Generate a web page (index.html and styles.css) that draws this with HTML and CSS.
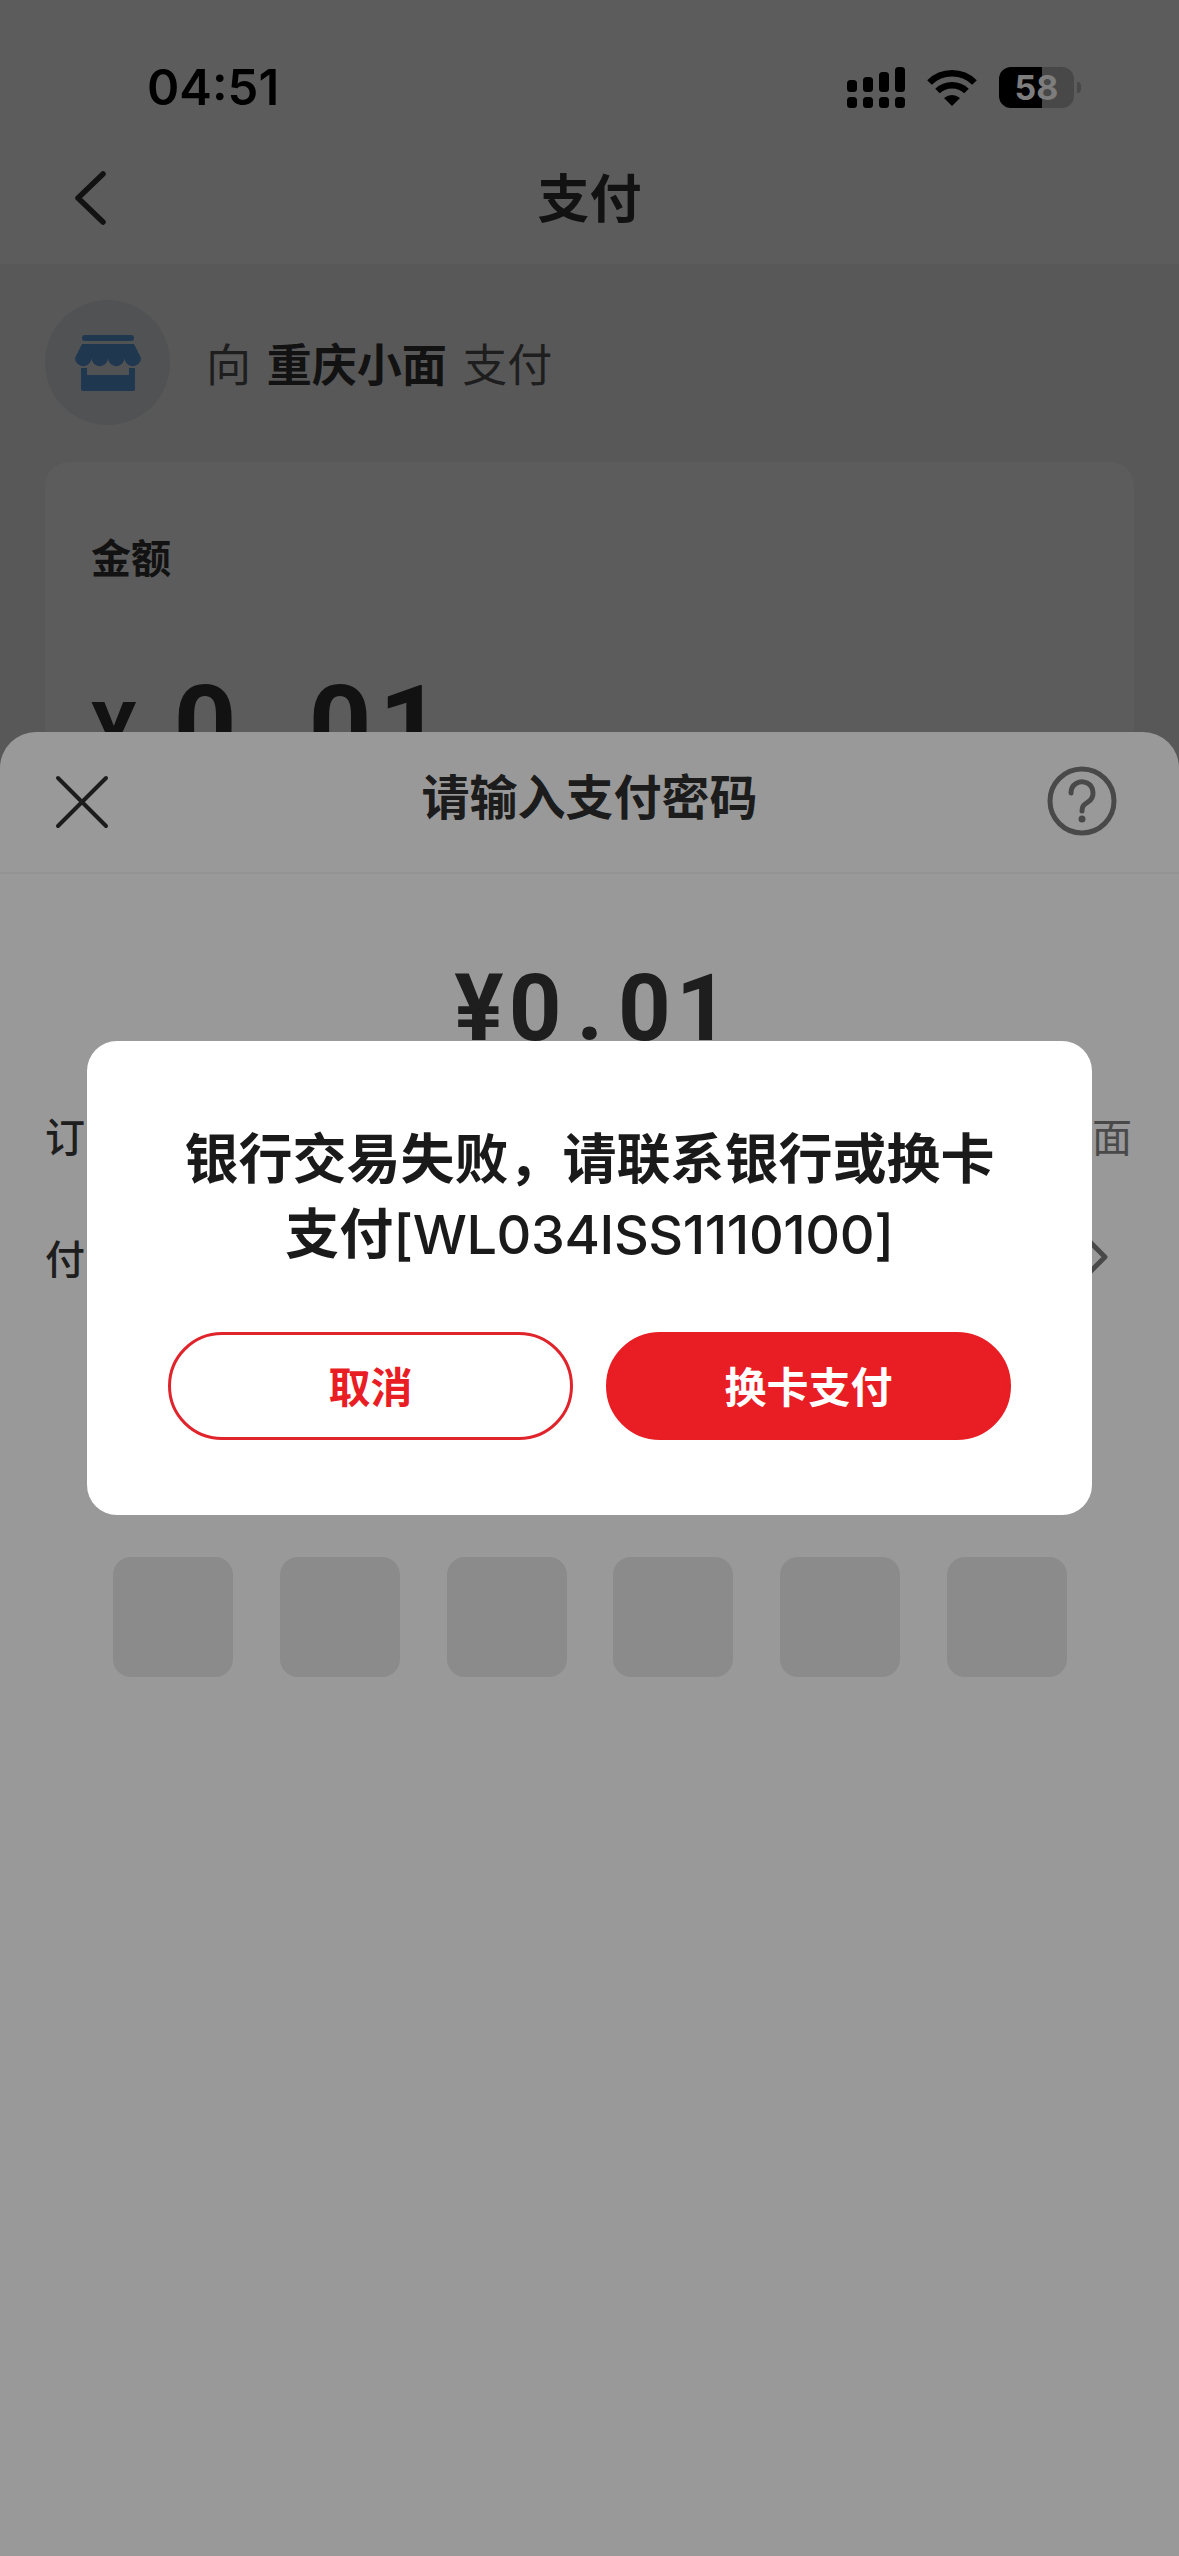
FILE: index.html
```html
<!DOCTYPE html>
<html lang="zh-CN">

<head>
    <meta http-equiv="Content-Type" content="text/html; charset=UTF-8" />
    <meta name="viewport" content="width=device-width, initial-scale=1.0">
    <title>支付</title>
    <link rel="stylesheet" href="styles.css">
</head>

<body>
    <div class="page">
        <header class="page-header">
            <div class="status-bar">
                <span class="status-time">04:51</span>
                <div class="status-icons">
                    <svg class="icon-signal" viewBox="0 0 58 41" width="58" height="41">
                        <rect x="0" y="13" width="10" height="12" rx="3.5" />
                        <rect x="16" y="10" width="10" height="15" rx="3.5" />
                        <rect x="32" y="5" width="10" height="20" rx="3.5" />
                        <rect x="48" y="0" width="10" height="25" rx="3.5" />
                        <rect x="0" y="30" width="10" height="11" rx="3.5" />
                        <rect x="16" y="30" width="10" height="11" rx="3.5" />
                        <rect x="32" y="30" width="10" height="11" rx="3.5" />
                        <rect x="48" y="30" width="10" height="11" rx="3.5" />
                    </svg>
                    <svg class="icon-wifi" viewBox="0 0 50 37" width="50" height="37">
                        <path d="M2.5 13.5A32 32 0 0 1 47.5 13.5" fill="none" stroke="#000" stroke-width="6.5" />
                        <path d="M10.5 22A21 21 0 0 1 39.5 22" fill="none" stroke="#000" stroke-width="6.5" />
                        <path d="M25 37L17 29Q25 23 33 29Z" />
                    </svg>
                    <div class="battery">58</div>
                </div>
            </div>
            <div class="nav-bar">
                <svg class="icon-back" viewBox="0 0 32 54" width="32" height="54">
                    <path d="M29 3L4 27L29 51" fill="none" stroke="#333" stroke-width="5.5" stroke-linecap="round" stroke-linejoin="round" />
                </svg>
                <h1 class="nav-title">支付</h1>
            </div>
        </header>

        <div class="merchant-row">
            <div class="merchant-avatar">
                <svg viewBox="0 0 66 56" width="66" height="56">
                    <rect x="7" y="0" width="52" height="6" rx="3" fill="#5a9ae0" />
                    <path d="M7 9H59L66 23a8.25 8.25 0 0 1-16.5 0a8.25 8.25 0 0 1-16.5 0a8.25 8.25 0 0 1-16.5 0a8.25 8.25 0 0 1-16.5 0Z" fill="#5a9ae0" />
                    <path d="M6 33h6v7h42v-7h6v21a2 2 0 0 1-2 2H8a2 2 0 0 1-2-2Z" fill="#5a9ae0" />
                </svg>
            </div>
            <p class="merchant-text">向 <b>重庆小面</b> 支付</p>
        </div>

        <div class="amount-card">
            <div class="amount-label">金额</div>
            <div class="amount-value"><span class="amount-yen">¥</span>0<span class="amount-dot">.</span>01</div>
        </div>
    </div>

    <div class="mask"></div>

    <section class="sheet">
        <div class="sheet-header">
            <svg class="icon-close" viewBox="0 0 54 54" width="54" height="54">
                <path d="M3 3L51 51M51 3L3 51" fill="none" stroke="#2f2f2f" stroke-width="4" stroke-linecap="round" />
            </svg>
            <h2 class="sheet-title">请输入支付密码</h2>
            <svg class="icon-help" viewBox="0 0 70 70" width="70" height="70">
                <circle cx="35" cy="35" r="32" fill="none" stroke="#7b7b7b" stroke-width="5" />
                <path d="M24 27a11 11 0 1 1 17 9c-4 2.500-6 4-6 9" fill="none" stroke="#7b7b7b" stroke-width="5" stroke-linecap="round" />
                <circle cx="35" cy="53" r="3.500" fill="#7b7b7b" />
            </svg>
        </div>
        <div class="sheet-amount">¥0<span class="sheet-dot">.</span>01</div>
        <div class="sheet-row">
            <span class="row-label">订单信息</span>
            <span class="row-value">重庆小面</span>
        </div>
        <div class="sheet-row">
            <span class="row-label">付款方式</span>
            <svg class="icon-more" viewBox="0 0 22 38" width="22" height="38">
                <path d="M3 3L19 19L3 35" fill="none" stroke="#7b7b7b" stroke-width="5" stroke-linecap="round" stroke-linejoin="round" />
            </svg>
        </div>
        <div class="pin-boxes">
            <div class="pin-box"></div>
            <div class="pin-box"></div>
            <div class="pin-box"></div>
            <div class="pin-box"></div>
            <div class="pin-box"></div>
            <div class="pin-box"></div>
        </div>
    </section>

    <div class="mask mask-dialog">
        <div class="dialog">
            <p class="dialog-text">银行交易失败，请联系银行或换卡<br>支付<span class="dialog-code">[WL034ISS1110100]</span></p>
            <div class="dialog-buttons">
                <button class="btn btn-cancel">取消</button>
                <button class="btn btn-confirm">换卡支付</button>
            </div>
        </div>
    </div>
</body>

</html>
```

FILE: styles.css
```css
* {
    box-sizing: border-box;
}

body {
    margin: 0;
    width: 1179px;
    height: 2556px;
    position: relative;
    overflow: hidden;
    background-color: #f5f5f5;
    font-family: Inter, 'Noto Sans CJK SC', sans-serif;
    color: #333333;
}

/* page under the sheet */
.page-header {
    background-color: #ffffff;
}

.status-bar {
    position: relative;
    z-index: 5;
    height: 132px;
    padding: 42px 105px 0 147px;
    display: flex;
    align-items: center;
    justify-content: space-between;
}

.status-time {
    font-size: 49px;
    font-weight: 600;
    color: #000000;
}

.status-icons {
    display: flex;
    align-items: center;
    gap: 22px;
}

.battery {
    position: relative;
    width: 75px;
    height: 41px;
    border-radius: 12px;
    background: linear-gradient(90deg, #000000 43px, #484848 43px);
    color: #7d7d7d;
    font-size: 34px;
    font-weight: 700;
    display: flex;
    align-items: center;
    justify-content: center;
}

.battery::after {
    content: "";
    position: absolute;
    left: 78px;
    top: 15px;
    width: 4px;
    height: 11px;
    border-radius: 0 4px 4px 0;
    background-color: #484848;
}

.nav-bar {
    position: relative;
    height: 132px;
    padding-bottom: 6px;
    display: flex;
    align-items: center;
    justify-content: center;
}

.icon-back {
    position: absolute;
    left: 74px;
    top: 39px;
}

.nav-title {
    margin: 0;
    font-size: 52px;
    font-weight: 700;
}

.merchant-row {
    display: flex;
    align-items: center;
    gap: 36px;
    padding: 36px 45px 37px;
}

.merchant-avatar {
    width: 125px;
    height: 125px;
    border-radius: 50%;
    background-color: #e0e4e8;
    display: flex;
    align-items: center;
    justify-content: center;
}

.merchant-text {
    margin: 0;
    font-size: 45px;
    word-spacing: 3px;
    color: #555555;
}

.merchant-text b {
    color: #333333;
}

.amount-card {
    margin: 0 45px;
    padding: 68px 46px 0;
    height: 500px;
    background-color: #ffffff;
    border-radius: 24px;
}

.amount-label {
    font-size: 40px;
    line-height: 58px;
    font-weight: 700;
}

.amount-value {
    margin-top: 78px;
    font-family: Roboto, sans-serif;
    font-size: 110px;
    line-height: 120px;
    font-weight: 700;
    letter-spacing: 7px;
}

.amount-yen {
    font-size: 85px;
    letter-spacing: 37px;
}

.amount-dot {
    margin: 0 13px;
}

/* dim layers */
.mask {
    position: absolute;
    top: 0;
    right: 0;
    bottom: 0;
    left: 0;
    background-color: rgba(0, 0, 0, 0.4);
}

.mask-dialog {
    display: flex;
    align-items: center;
    justify-content: center;
}

/* password sheet */
.sheet {
    position: absolute;
    top: 732px;
    right: 0;
    bottom: 0;
    left: 0;
    background-color: #ffffff;
    border-radius: 36px 36px 0 0;
}

.sheet-header {
    position: relative;
    height: 142px;
    border-bottom: 2px solid #f5f5f5;
    display: flex;
    align-items: center;
    justify-content: center;
    padding-bottom: 16px;
}

.icon-close {
    position: absolute;
    left: 55px;
    top: 43px;
}

.icon-help {
    position: absolute;
    left: 1047px;
    top: 34px;
}

.sheet-title {
    margin: 0;
    font-size: 48px;
    font-weight: 700;
    color: #2f2f2f;
}

.sheet-amount {
    margin-top: 85px;
    padding-left: 9px;
    text-align: center;
    font-family: Roboto, sans-serif;
    font-size: 92px;
    line-height: 100px;
    font-weight: 700;
    letter-spacing: 5px;
}

.sheet-dot {
    margin: 0 10px;
}

.sheet-row {
    height: 60px;
    margin-top: 62px;
    padding: 0 47px 0 45px;
    display: flex;
    align-items: center;
    justify-content: space-between;
    font-size: 40px;
}

.sheet-amount + .sheet-row {
    margin-top: 46px;
}

.row-label {
    font-weight: 500;
    letter-spacing: 4px;
}

.row-value {
    color: #7b7b7b;
}

.icon-more {
    margin-right: 24px;
}

.pin-boxes {
    margin-top: 270px;
    padding: 0 112px 0 113px;
    display: flex;
    justify-content: space-between;
}

.pin-box {
    width: 120px;
    height: 120px;
    border-radius: 18px;
    background-color: #e8e8e8;
}

/* error dialog */
.dialog {
    width: 1005px;
    height: 474px;
    padding: 81px 81px 0;
    background-color: #ffffff;
    border-radius: 30px;
}

.dialog-text {
    margin: 0;
    text-align: center;
    font-size: 54px;
    line-height: 75px;
    font-weight: 600;
    color: #1a1a1a;
    white-space: nowrap;
}

.dialog-code {
    font-weight: 500;
    letter-spacing: -0.4px;
}

.dialog-buttons {
    margin-top: 60px;
    display: flex;
    gap: 33px;
}

.btn {
    flex: 1;
    height: 108px;
    border: 3px solid #e0242b;
    border-radius: 54px;
    font-family: inherit;
    font-size: 42px;
    font-weight: 700;
    padding: 0 0 3px;
}

.btn-cancel {
    background-color: #ffffff;
    color: #e91d24;
}

.btn-confirm {
    background-color: #e91d24;
    border-color: #e91d24;
    color: #ffffff;
}
```
